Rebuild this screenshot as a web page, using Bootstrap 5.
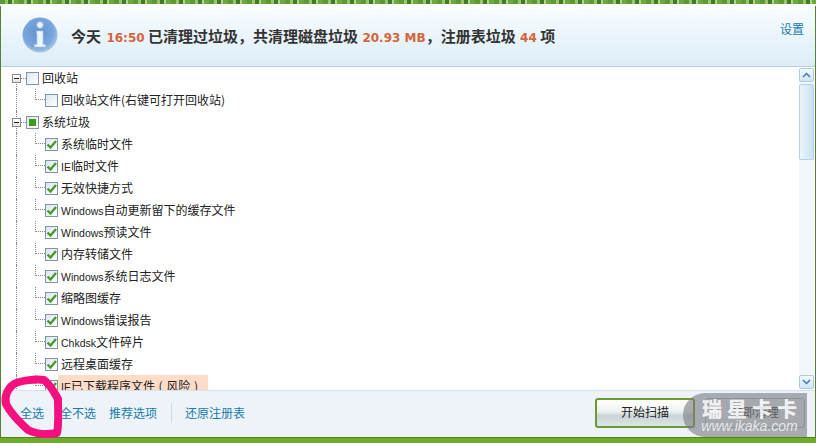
<!DOCTYPE html>
<html lang="zh-CN">
<head>
    <meta charset="UTF-8">
    <meta name="viewport" content="width=device-width, initial-scale=1.0">
    <title>垃圾清理</title>
    <link href="https://cdn.jsdelivr.net/npm/bootstrap@5.3.0/dist/css/bootstrap.min.css" rel="stylesheet">
    <style>
        html, body { height: 443px; overflow: hidden; }
        body {
            background: #fff;
            font-family: "Noto Sans CJK SC", "Liberation Sans", sans-serif;
            font-size: 12px;
            color: #222;
        }
        .app-shell { width: 816px; height: 443px; position: relative; }
        .grass-strip {
            height: 4px;
            background: repeating-linear-gradient(90deg, #5d9a35 0 5px, #9cc46a 5px 8px, #3f7d25 8px 12px, #b5d48a 12px 14px, #6da83f 14px 19px);
        }
        .window-body {
            margin-top: 2px;
            height: 431px;
            border-left: 1px solid #55803a;
            border-right: 1px solid #55803a;
        }
        .info-head {
            height: 61px;
            flex: none;
            background: linear-gradient(#f8fdff, #dcedf7);
            border-bottom: 1px solid #b0d3e4;
            padding: 11px 11px 0 21px;
        }
        .info-icon { width: 36px; height: 36px; flex: none; }
        .info-text {
            font-size: 15px;
            font-weight: 700;
            color: #333;
            margin-left: 13px;
            margin-top: 9px;
            line-height: 20px;
            white-space: pre;
        }
        .info-text b { font-family: "DejaVu Sans", sans-serif; font-size: 12px; color: #d4643a; margin-left: 1px; }
        .info-text b:first-child { margin-left: 2px; }
        .link-blue { color: #1a7ba8; text-decoration: none; line-height: 16px; }
        .tree-area { flex: 1 1 auto; min-height: 0; overflow: hidden; position: relative; }
        .tree-list { margin: 0; padding: 0; list-style: none; flex: 1 1 auto; }
        .tree-row {
            height: 22px;
            line-height: 22px;
            position: relative;
            padding-left: 44px;
            display: flex;
            align-items: center;
            white-space: pre;
        }
        .tree-row::before {
            content: "";
            position: absolute;
            left: 15px;
            top: 0;
            bottom: 0;
            border-left: 1px dotted #888;
        }
        .tree-row.sub::after {
            content: "";
            position: absolute;
            left: 34px;
            top: 0;
            width: 10px;
            height: 11px;
            border-left: 1px dotted #888;
            border-bottom: 1px dotted #888;
        }
        .tree-row.top-row { padding-left: 11px; }
        .tree-row.first-row::before { top: 11px; }
        .tree-row.top-row .joint { width: 5px; border-bottom: 1px dotted #888; flex: none; }
        .lat { font-family: "Liberation Sans", sans-serif; font-size: 10.5px; }
        .expander {
            width: 9px;
            height: 9px;
            flex: none;
            border: 1px solid #8a8a8a;
            background: linear-gradient(#fff, #e4e4dc);
            position: relative;
            z-index: 1;
        }
        .expander::after {
            content: "";
            position: absolute;
            left: 1px;
            right: 1px;
            top: 3px;
            height: 1px;
            background: #222;
        }
        .tick-box {
            width: 13px;
            height: 13px;
            flex: none;
            margin-right: 3px;
            border: 1px solid #7f95a8;
            background: linear-gradient(135deg, #dde5ef, #fff);
            display: flex;
            align-items: center;
            justify-content: center;
            position: relative;
            z-index: 1;
        }
        .tick-box svg { width: 11px; height: 11px; display: block; }
        .tick-box .partial { width: 7px; height: 7px; background: #3e9a1c; }
        .risk-label {
            display: block;
            background: #fddcc8;
            width: 150px;
            margin-left: -3px;
            padding-left: 3px;
            word-spacing: 1px;
        }
        .scroll-rail {
            width: 15px;
            flex: none;
            margin: 1px 1px 1px 0;
            background: #f1f6fa;
            gap: 2px;
        }
        .scroll-btn {
            height: 14px;
            flex: none;
            border: 1px solid #a8cce0;
            border-radius: 2px;
            background: linear-gradient(#f4fafe, #cfe5f4);
            display: flex;
            align-items: center;
            justify-content: center;
        }
        .scroll-thumb {
            height: 76px;
            flex: none;
            border: 1px solid #b4d2e4;
            border-radius: 2px;
            background: linear-gradient(90deg, #eaf4fb, #c9e2f3);
        }
        .foot-bar {
            height: 47px;
            flex: none;
            background: #eef3fa;
            border-top: 1px solid #d5e2ec;
            padding: 0 10px 3px 19px;
            position: relative;
        }
        .foot-links a { margin-right: 13px; }
        .foot-links a:first-child { margin-right: 16px; }
        .foot-sep { width: 1px; height: 20px; background: #c9dcea; margin: 0 13px 0 1px; }
        .scan-btn {
            width: 100px;
            height: 30px;
            padding: 0 0 2px;
            border-radius: 3px;
            font-size: 12px;
            line-height: 1;
            color: #222;
        }
        .scan-start {
            border: 2px solid #6b9a32;
            background: linear-gradient(#fff 0, #eef1ee 45%, #c8d4d6 60%, #dbe5e6 100%);
        }
        .scan-clean {
            border: 1px solid #a8b4c0;
            background: #e8edf2;
            color: #333;
        }
        .scan-gap { gap: 10px; }
        .base-green { height: 6px; background: #6fac2a; border-top: 1px solid #4e7f22; }
        .scribble { position: absolute; left: 0; top: 0; pointer-events: none; z-index: 3; }
        .mark-badge {
            position: absolute;
            left: 683px;
            top: 393px;
            width: 124px;
            height: 44px;
            z-index: 4;
            background: rgba(120, 122, 126, .6);
            border-radius: 22px 0 0 22px;
            color: rgba(255, 255, 255, .85);
            text-align: center;
            padding-left: 9px;
        }
        .mark-title { font-size: 20px; font-weight: 900; line-height: 20px; letter-spacing: 5px; margin-top: 6px; padding-left: 5px; white-space: nowrap; }
        .mark-url { font-family: "Liberation Sans", sans-serif; font-style: italic; font-size: 14px; line-height: 15px; color: rgba(240, 240, 240, .9); white-space: nowrap; }
    </style>
</head>
<body>
    <div class="app-shell">
        <div class="grass-strip"></div>
        <div class="window-body d-flex flex-column">
            <!-- top info banner -->
            <div class="info-head d-flex">
                <svg class="info-icon" viewBox="0 0 36 36">
                    <defs>
                        <radialGradient id="orb" cx="45%" cy="42%" r="62%">
                            <stop offset="0" stop-color="#5f93d2"/>
                            <stop offset=".7" stop-color="#7aa6dc"/>
                            <stop offset="1" stop-color="#b4d0ee"/>
                        </radialGradient>
                    </defs>
                    <circle cx="18" cy="18" r="17.500" fill="url(#orb)"/>
                    <circle cx="18" cy="8" r="3.200" fill="#eef4fb" stroke="#a9c6e8"/>
                    <path d="M14.500 14h6.500v13.500h2.500V30h-11v-2.500h2.500V16.500h-.5z" fill="#eef4fb" stroke="#a9c6e8" stroke-width=".7"/>
                </svg>
                <div class="info-text flex-grow-1">今天 <b>16:50</b> 已清理过垃圾，共清理磁盘垃圾 <b>20.93 MB</b>，注册表垃圾 <b>44</b> 项</div>
                <a href="#" class="link-blue mt-1">设置</a>
            </div>

            <!-- tree and scrollbar -->
            <div class="tree-area d-flex">
                <ul class="tree-list" id="cleanTree"></ul>
                <div class="scroll-rail d-flex flex-column">
                    <div class="scroll-btn"><svg width="9" height="6" viewBox="0 0 9 6"><path d="M1 5 4.500 1.500 8 5" fill="none" stroke="#3f78c0" stroke-width="1.500"/></svg></div>
                    <div class="scroll-thumb"></div>
                    <div class="flex-grow-1"></div>
                    <div class="scroll-btn"><svg width="9" height="6" viewBox="0 0 9 6"><path d="M1 1 4.500 4.500 8 1" fill="none" stroke="#3f78c0" stroke-width="1.500"/></svg></div>
                </div>
            </div>

            <!-- footer actions -->
            <div class="foot-bar d-flex align-items-center">
                <div class="foot-links d-flex align-items-center flex-grow-1">
                    <a href="#" class="link-blue">全选</a>
                    <a href="#" class="link-blue">全不选</a>
                    <a href="#" class="link-blue">推荐选项</a>
                    <span class="foot-sep"></span>
                    <a href="#" class="link-blue">还原注册表</a>
                </div>
                <div class="d-flex scan-gap">
                    <button type="button" class="btn scan-btn scan-start">开始扫描</button>
                    <button type="button" class="btn scan-btn scan-clean">立即清理</button>
                </div>
            </div>
        </div>
        <div class="base-green"></div>

        <!-- pink marker scribble around the first link -->
        <svg class="scribble" width="816" height="443" viewBox="0 0 816 443">
            <path d="M14 384C22 380 36 379 44 380 50 384 54 392 58 399 58 412 59 424 57 433 46 435 36 434 28 430 20 422 12 416 6 404 4 396 8 388 14 384Z" fill="none" stroke="#f5107f" stroke-width="8" stroke-linejoin="round"/>
        </svg>

        <!-- site watermark -->
        <div class="mark-badge">
            <div class="mark-title">瑞星卡卡</div>
            <div class="mark-url">www.ikaka.com</div>
        </div>
    </div>
    <script src="https://cdn.jsdelivr.net/npm/bootstrap@5.3.0/dist/js/bootstrap.bundle.min.js"></script>
    <script>
        const cleanTree = document.getElementById('cleanTree');
        const tick = '<svg viewBox="0 0 11 11"><path d="M1.500 5.500 4.500 8.500 10 2" fill="none" stroke="#4a9a2a" stroke-width="2.400"/></svg>';
        const minusHead = '<span class="expander"></span><span class="joint"></span>';

        // [row kind, box content, label html]
        const rows = [
            ['top-row first-row', '', '回收站'],
            ['sub', '', '回收站文件(右键可打开回收站)'],
            ['top-row', '<span class="partial"></span>', '系统垃圾'],
            ['sub', tick, '系统临时文件'],
            ['sub', tick, '<span class="lat">IE</span>临时文件'],
            ['sub', tick, '无效快捷方式'],
            ['sub', tick, '<span class="lat">Windows</span>自动更新留下的缓存文件'],
            ['sub', tick, '<span class="lat">Windows</span>预读文件'],
            ['sub', tick, '内存转储文件'],
            ['sub', tick, '<span class="lat">Windows</span>系统日志文件'],
            ['sub', tick, '缩略图缓存'],
            ['sub', tick, '<span class="lat">Windows</span>错误报告'],
            ['sub', tick, '<span class="lat">Chkdsk</span>文件碎片'],
            ['sub', tick, '远程桌面缓存'],
            ['sub', tick, '<span class="risk-label"><span class="lat">IE</span>已下载程序文件 ( 风险 )</span>']
        ];

        rows.forEach(([kind, box, label]) => {
            const li = document.createElement('li');
            li.className = 'tree-row ' + kind;
            const head = kind.includes('top-row') ? minusHead : '';
            // flex would split text and spans into separate items, keep the label in one span
            li.innerHTML = `${head}<span class="tick-box">${box}</span><span>${label}</span>`;
            cleanTree.appendChild(li);
        });
    </script>
</body>
</html>
